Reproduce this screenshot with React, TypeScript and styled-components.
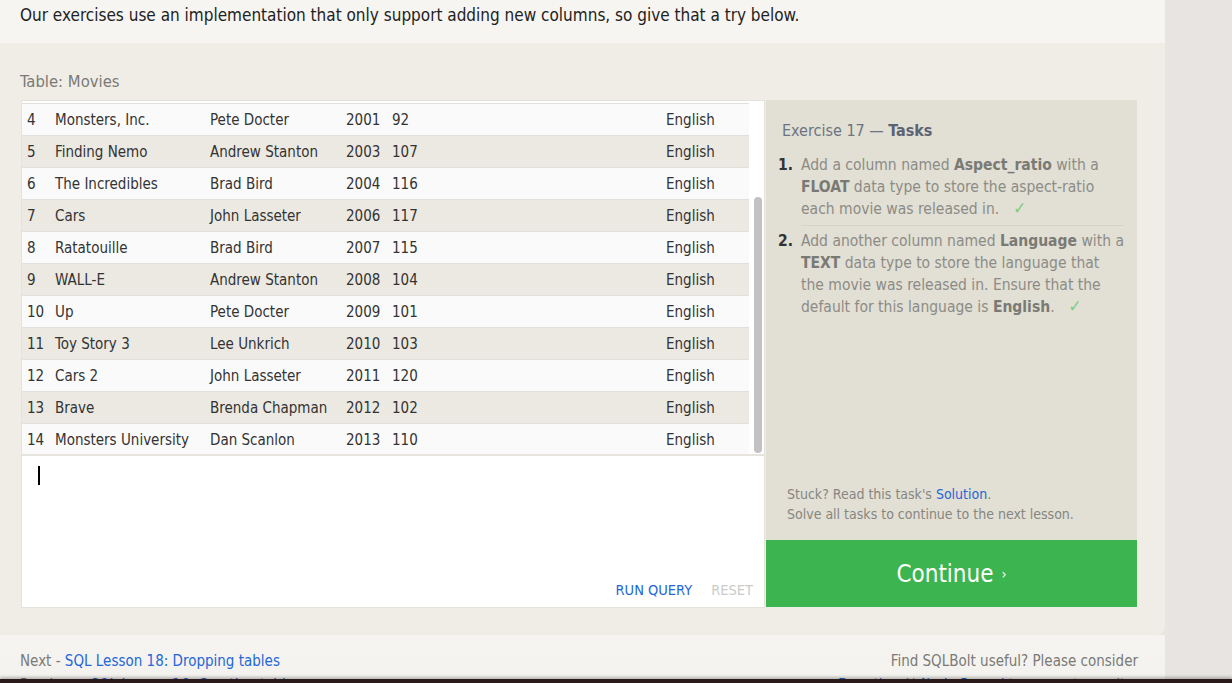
import React from "react";
import styled, { createGlobalStyle } from "styled-components";

const GlobalStyle = createGlobalStyle`
  html, body {
    margin: 0;
    padding: 0;
    background: #e8e4e1;
  }
  body {
    font-family: "DejaVu Sans Condensed", "DejaVu Sans", sans-serif;
    font-stretch: condensed;
    color: #333;
    overflow: hidden;
  }
`;

const Page = styled.div`
  width: 1165px;
  height: 683px;
  overflow: hidden;
  display: flex;
  flex-direction: column;
`;

const Intro = styled.div`
  flex-shrink: 0;
  background: #f6f5f1;
  height: 43px;
  padding: 5px 20px 0;
  box-sizing: border-box;
  font-size: 17px;
  line-height: 20px;
  color: #222;
`;

const Main = styled.section`
  flex-shrink: 0;
  background: #efede6;
  border-bottom-right-radius: 8px;
  padding: 29px 0 27px 21px;
`;

const TableLabel = styled.div`
  font-size: 16.5px;
  line-height: 20px;
  color: #7a7a76;
  margin: 0 0 8px -1px;
`;

const Workspace = styled.div`
  display: flex;
  align-items: flex-start;
`;

const LeftCol = styled.div`
  width: 744px;
  display: flex;
  flex-direction: column;
`;

const Results = styled.div`
  height: 356px;
  box-sizing: border-box;
  background: #fff;
  border: 1px solid #e4e2db;
  border-bottom: 2px solid #e6e4dd;
  display: flex;
  overflow: hidden;
`;

const Rows = styled.div`
  width: 727px;
  padding-top: 2px;
`;

const Row = styled.div<{ $alt: boolean }>`
  display: grid;
  grid-template-columns: 28px 155px 136px 46px 274px 1fr;
  height: 32px;
  box-sizing: border-box;
  align-items: center;
  padding-left: 5px;
  font-size: 15px;
  color: #333;
  background: ${(p) => (p.$alt ? "#ebe9e2" : "#fafafa")};
  border-top: 1px solid #e2e0da;
`;

const Cell = styled.span`
  white-space: nowrap;
`;

const ScrollGutter = styled.div`
  flex: 1;
  background: #fff;
  display: flex;
  justify-content: center;
`;

const ScrollThumb = styled.div`
  width: 8px;
  height: 256px;
  margin-top: 96px;
  margin-left: 3px;
  border-radius: 4px;
  background: #c2c2c2;
`;

const Editor = styled.div`
  height: 152px;
  box-sizing: border-box;
  background: #fff;
  border: 1px solid #e4e2db;
  border-top: none;
  display: flex;
  flex-direction: column;
  justify-content: space-between;
  padding: 10px 11px 7px 16px;
`;

const Caret = styled.div`
  width: 2px;
  height: 19px;
  background: #000;
`;

const EditorActions = styled.div`
  display: flex;
  justify-content: flex-end;
  gap: 19px;
`;

const ActionButton = styled.span<{ $disabled?: boolean }>`
  font-size: 14.5px;
  line-height: 20px;
  color: ${(p) => (p.$disabled ? "#cbcbcb" : "#2467d6")};
  text-transform: uppercase;
`;

const RightCol = styled.div`
  width: 371px;
  margin-left: 1px;
  height: 507px;
  display: flex;
  flex-direction: column;
`;

const TaskPanel = styled.div`
  flex: 1;
  background: #e2dfd4;
  padding: 20px 13px 16px 12px;
  display: flex;
  flex-direction: column;
`;

const TaskTitle = styled.h3`
  margin: 0 0 12px 4px;
  font-size: 16px;
  line-height: 22px;
  font-weight: normal;
  color: #6c7482;
  b {
    color: #5c6474;
    font-weight: bold;
  }
`;

const TaskList = styled.ol`
  list-style: none;
  margin: 0;
  padding: 0;
`;

const TaskItem = styled.li`
  display: flex;
  font-size: 15.5px;
  line-height: 22px;
  color: #8c8c86;
  & + & {
    margin-top: 4px;
  }
`;

const TaskNum = styled.span`
  width: 23px;
  flex-shrink: 0;
  font-weight: bold;
  color: #333;
`;

const TaskText = styled.div<{ $divider?: boolean }>`
  flex: 1;
  padding-bottom: 5px;
  border-bottom: 1px solid ${(p) => (p.$divider ? "#d6d3c8" : "transparent")};
  b {
    color: #7a7a74;
  }
`;

const Check = styled.span`
  color: #7fcb7f;
  font-size: 17px;
  line-height: 0;
  margin-left: 14px;
`;

const Stuck = styled.div`
  margin-top: auto;
  padding-left: 9px;
  font-size: 14px;
  line-height: 20px;
  color: #868680;
  a {
    color: #2467d6;
    text-decoration: none;
  }
`;

const ContinueButton = styled.div`
  height: 67px;
  flex-shrink: 0;
  background: #3cb550;
  color: #fff;
  display: flex;
  align-items: center;
  justify-content: center;
  font-size: 24px;
  gap: 8px;
  span {
    font-size: 14px;
  }
`;

const Footer = styled.footer`
  flex-shrink: 0;
  height: 60px;
  background: linear-gradient(#f5f4f0 0%, #f3f2ee 60%, #e9e8e4 100%);
  padding: 16px 27px 0 20px;
  display: grid;
  grid-template-columns: 1fr auto;
  grid-auto-rows: 20px;
  row-gap: 4px;
  font-size: 15px;
  line-height: 20px;
  color: #7a7a76;
  a {
    color: #2467d6;
    text-decoration: none;
  }
`;

const FooterRight = styled.div`
  text-align: right;
`;

const BottomBar = styled.div`
  position: fixed;
  left: 0;
  right: 0;
  bottom: 0;
  height: 4px;
  background: #2a1a1a;
  box-shadow: 0 -2px 3px rgba(0, 0, 0, 0.25);
`;

const movies: [number, string, string, number, number][] = [
  [4, "Monsters, Inc.", "Pete Docter", 2001, 92],
  [5, "Finding Nemo", "Andrew Stanton", 2003, 107],
  [6, "The Incredibles", "Brad Bird", 2004, 116],
  [7, "Cars", "John Lasseter", 2006, 117],
  [8, "Ratatouille", "Brad Bird", 2007, 115],
  [9, "WALL-E", "Andrew Stanton", 2008, 104],
  [10, "Up", "Pete Docter", 2009, 101],
  [11, "Toy Story 3", "Lee Unkrich", 2010, 103],
  [12, "Cars 2", "John Lasseter", 2011, 120],
  [13, "Brave", "Brenda Chapman", 2012, 102],
  [14, "Monsters University", "Dan Scanlon", 2013, 110],
];

export default function App() {
  return (
    <>
      <GlobalStyle />
      <Page>
        <Intro>
          Our exercises use an implementation that only support adding new columns, so give that a try below.
        </Intro>
        <Main>
          <TableLabel>Table: Movies</TableLabel>
          <Workspace>
            <LeftCol>
              <Results>
                <Rows>
                  {movies.map((m, i) => (
                    <Row key={m[0]} $alt={i % 2 === 1}>
                      <Cell>{m[0]}</Cell>
                      <Cell>{m[1]}</Cell>
                      <Cell>{m[2]}</Cell>
                      <Cell>{m[3]}</Cell>
                      <Cell>{m[4]}</Cell>
                      <Cell>English</Cell>
                    </Row>
                  ))}
                </Rows>
                <ScrollGutter>
                  <ScrollThumb />
                </ScrollGutter>
              </Results>
              <Editor>
                <Caret />
                <EditorActions>
                  <ActionButton>Run Query</ActionButton>
                  <ActionButton $disabled>Reset</ActionButton>
                </EditorActions>
              </Editor>
            </LeftCol>
            <RightCol>
              <TaskPanel>
                <TaskTitle>
                  Exercise 17 — <b>Tasks</b>
                </TaskTitle>
                <TaskList>
                  <TaskItem>
                    <TaskNum>1.</TaskNum>
                    <TaskText $divider>
                      Add a column named <b>Aspect_ratio</b> with a <b>FLOAT</b> data type to store the
                      aspect-ratio each movie was released in.
                      <Check>✓</Check>
                    </TaskText>
                  </TaskItem>
                  <TaskItem>
                    <TaskNum>2.</TaskNum>
                    <TaskText>
                      Add another column named <b>Language</b> with a <b>TEXT</b> data type to store the
                      language that the movie was released in. Ensure that the default for this language
                      is <b>English</b>.
                      <Check>✓</Check>
                    </TaskText>
                  </TaskItem>
                </TaskList>
                <Stuck>
                  Stuck? Read this task's <a href="#">Solution</a>.
                  <br />
                  Solve all tasks to continue to the next lesson.
                </Stuck>
              </TaskPanel>
              <ContinueButton>
                Continue <span>›</span>
              </ContinueButton>
            </RightCol>
          </Workspace>
        </Main>
        <Footer>
          <div>
            Next - <a href="#">SQL Lesson 18: Dropping tables</a>
          </div>
          <FooterRight>Find SQLBolt useful? Please consider</FooterRight>
          <div>
            Previous - <a href="#">SQL Lesson 16: Creating tables</a>
          </div>
          <FooterRight>
            <a href="#">Donating ($4) via Paypal</a> to support our site.
          </FooterRight>
        </Footer>
      </Page>
      <BottomBar />
    </>
  );
}
